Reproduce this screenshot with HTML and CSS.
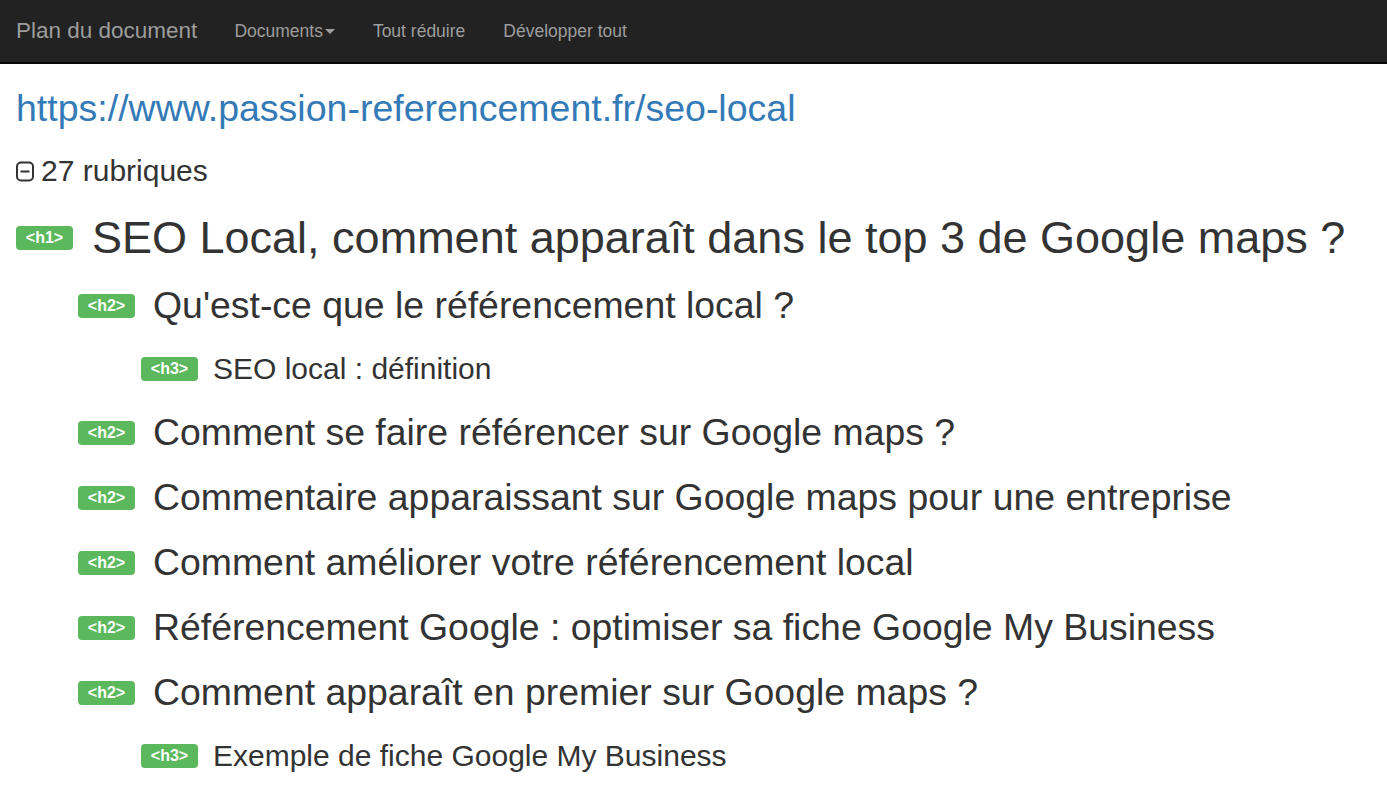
FILE: index.html
```html
<!DOCTYPE html>
<html lang="fr">

<head>
    <meta charset="UTF-8">
    <meta name="viewport" content="width=device-width, initial-scale=1.0">
    <title>Plan du document</title>
    <link rel="stylesheet" href="styles.css">
</head>

<body>
    <nav class="navbar">
        <a class="brand" href="#">Plan du document</a>
        <ul class="nav">
            <li><a href="#">Documents<span class="caret"></span></a></li>
            <li><a href="#">Tout réduire</a></li>
            <li><a href="#">Développer tout</a></li>
        </ul>
    </nav>

    <div class="container">
        <a class="doc-url" href="#">https://www.passion-referencement.fr/seo-local</a>
        <p class="count">
            <svg class="toggle" width="18" height="21" viewBox="0 0 18 21">
                <rect x="1" y="1.5" width="16" height="18" rx="4" fill="none" stroke="#333" stroke-width="2"/>
                <line x1="4.5" y1="10.5" x2="13.5" y2="10.5" stroke="#333" stroke-width="2"/>
            </svg>
            <span>27 rubriques</span>
        </p>

        <ul class="outline">
            <li class="row lvl1"><span class="tag">&lt;h1&gt;</span><span class="title">SEO Local, comment apparaît dans le top 3 de Google maps ?</span></li>
            <li class="row lvl2"><span class="tag">&lt;h2&gt;</span><span class="title">Qu'est-ce que le référencement local ?</span></li>
            <li class="row lvl3"><span class="tag">&lt;h3&gt;</span><span class="title">SEO local : définition</span></li>
            <li class="row lvl2"><span class="tag">&lt;h2&gt;</span><span class="title">Comment se faire référencer sur Google maps ?</span></li>
            <li class="row lvl2"><span class="tag">&lt;h2&gt;</span><span class="title">Commentaire apparaissant sur Google maps pour une entreprise</span></li>
            <li class="row lvl2"><span class="tag">&lt;h2&gt;</span><span class="title">Comment améliorer votre référencement local</span></li>
            <li class="row lvl2"><span class="tag">&lt;h2&gt;</span><span class="title">Référencement Google : optimiser sa fiche Google My Business</span></li>
            <li class="row lvl2"><span class="tag">&lt;h2&gt;</span><span class="title">Comment apparaît en premier sur Google maps ?</span></li>
            <li class="row lvl3"><span class="tag">&lt;h3&gt;</span><span class="title">Exemple de fiche Google My Business</span></li>
        </ul>
    </div>
</body>

</html>
```

FILE: styles.css
```css
body {
    margin: 0;
    font-family: "Liberation Sans", Arial, sans-serif;
    color: #333;
    background: #fff;
    overflow: hidden;
}

a {
    text-decoration: none;
}

.navbar {
    height: 62px;
    background: #222;
    border-bottom: 2px solid #080808;
    display: flex;
    align-items: center;
}

.brand {
    color: #9d9d9d;
    font-size: 22.5px;
    padding: 0 19px 0 16px;
}

.nav {
    list-style: none;
    margin: 0;
    padding: 0;
    display: flex;
}

.nav a {
    display: block;
    color: #9d9d9d;
    font-size: 17.5px;
    padding: 0 19px;
}

.nav li:first-child a {
    padding-left: 18px;
}

.caret {
    display: inline-block;
    width: 0;
    height: 0;
    margin-left: 2px;
    vertical-align: middle;
    border-top: 5px solid #9d9d9d;
    border-left: 5px solid transparent;
    border-right: 5px solid transparent;
}

.container {
    padding: 0 16px;
}

.doc-url {
    display: block;
    color: #337ab7;
    font-size: 37.5px;
    line-height: 45px;
    margin-top: 22px;
}

.count {
    display: flex;
    align-items: center;
    gap: 7px;
    font-size: 30px;
    line-height: 34px;
    margin: 23px 0 0;
}

.toggle {
    flex-shrink: 0;
    margin-top: 1px;
}

.outline {
    list-style: none;
    margin: 14px 0 0;
    padding: 0;
}

.row {
    display: flex;
    align-items: center;
}

.tag {
    background: #5cb85c;
    color: #fff;
    font-weight: bold;
    font-size: 16px;
    border-radius: 4px;
    width: 57px;
    height: 24px;
    line-height: 24px;
    text-align: center;
    flex-shrink: 0;
}

.lvl1 {
    height: 71px;
}

.lvl1 .title {
    font-size: 45px;
    margin-left: 19px;
}

.lvl2 {
    height: 65px;
    padding-left: 62px;
}

.lvl2 .title {
    font-size: 37.4px;
    margin-left: 18px;
}

.lvl3 {
    height: 62px;
    padding-left: 125px;
}

.lvl3 .title {
    font-size: 30px;
    margin-left: 15px;
}
```
